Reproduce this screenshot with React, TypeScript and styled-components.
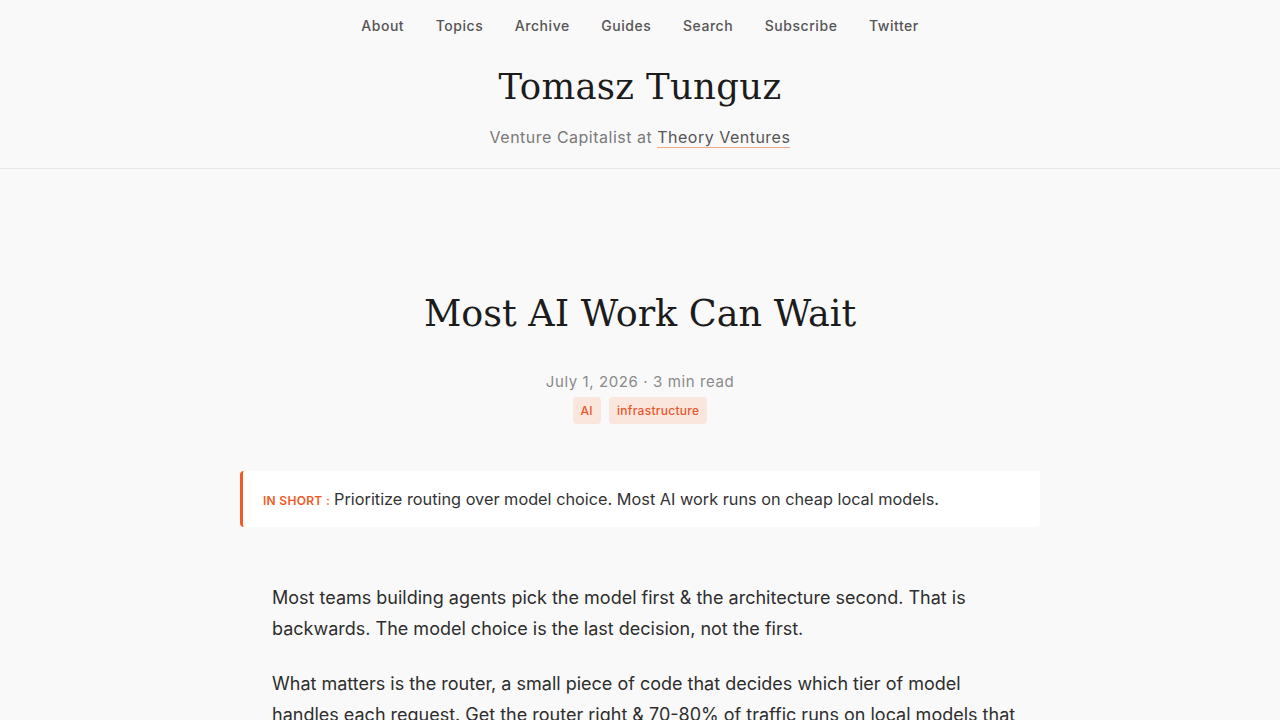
import styled, { createGlobalStyle } from "styled-components";

const GlobalStyle = createGlobalStyle`
  html, body {
    margin: 0;
    padding: 0;
    background: #f9f9f9;
  }
  body {
    font-family: Inter, "Liberation Sans", sans-serif;
    color: #2b2b2b;
  }
`;

const navItems = ["About", "Topics", "Archive", "Guides", "Search", "Subscribe", "Twitter"];

const App = () => {
  return (
    <>
      <GlobalStyle />
      <Header>
        <Nav>
          {navItems.map((item) => (
            <NavLink key={item} href="#">
              {item}
            </NavLink>
          ))}
        </Nav>
        <SiteTitle>Tomasz Tunguz</SiteTitle>
        <Tagline>
          Venture Capitalist at <Underlined href="#">Theory Ventures</Underlined>
        </Tagline>
      </Header>

      <Article>
        <PostTitle>Most AI Work Can Wait</PostTitle>
        <Meta>July 1, 2026 · 3 min read</Meta>
        <Tags>
          <Tag>AI</Tag>
          <Tag>infrastructure</Tag>
        </Tags>

        <Summary>
          <SummaryLabel>IN SHORT :</SummaryLabel>
          <SummaryText>
            Prioritize routing over model choice. Most AI work runs on cheap local models.
          </SummaryText>
        </Summary>

        <Body>
          <P>
            Most teams building agents pick the model first &amp; the architecture second. That is
            backwards. The model choice is the last decision, not the first.
          </P>
          <P>
            What matters is the router, a small piece of code that decides which tier of model
            handles each request. Get the router right &amp; 70-80% of traffic runs on local models that
            cost almost nothing to run.
          </P>
        </Body>
      </Article>
    </>
  );
};

export default App;

const Header = styled.header`
  display: flex;
  flex-direction: column;
  align-items: center;
  border-bottom: 1px solid #e9e9e9;
  padding-bottom: 20px;
`;

const Nav = styled.nav`
  display: flex;
  justify-content: center;
  gap: 31.5px;
  padding-top: 17px;
  height: 18px;
`;

const NavLink = styled.a`
  font-size: 14px;
  font-weight: 500;
  letter-spacing: 0.55px;
  color: #555;
  text-decoration: none;
`;

const SiteTitle = styled.h1`
  font-family: "DejaVu Serif", "Liberation Serif", serif;
  font-weight: 400;
  font-size: 35.5px;
  letter-spacing: 0.3px;
  color: #1c1c1c;
  margin: 28px 0 0;
  line-height: 48px;
`;

const Tagline = styled.p`
  font-size: 16px;
  letter-spacing: 0.5px;
  color: #7a7a7a;
  margin: 15px 0 0;
  line-height: 22px;
`;

const Underlined = styled.a`
  color: #555;
  text-decoration: none;
  border-bottom: 1px solid #f0a58c;
`;

const Article = styled.main`
  width: 800px;
  margin: 0 auto;
  display: flex;
  flex-direction: column;
  align-items: center;
  padding-top: 118px;
`;

const PostTitle = styled.h2`
  font-family: "DejaVu Serif", "Liberation Serif", serif;
  font-weight: 400;
  font-size: 36.5px;
  color: #1c1c1c;
  margin: 0;
  line-height: 54px;
`;

const Meta = styled.div`
  margin-top: 31px;
  font-size: 15px;
  letter-spacing: 0.6px;
  color: #8a8a8a;
  line-height: 20px;
`;

const Tags = styled.div`
  display: flex;
  gap: 8px;
  margin-top: 5px;
`;

const Tag = styled.span`
  background: #fae6dd;
  color: #e9582c;
  font-size: 12px;
  font-weight: 500;
  letter-spacing: 0.3px;
  padding: 0 8px;
  height: 27px;
  line-height: 27px;
  border-radius: 4px;
`;

const Summary = styled.div`
  align-self: stretch;
  margin-top: 47px;
  background: #fff;
  border-left: 3px solid #f05a24;
  border-radius: 4px;
  height: 56px;
  display: flex;
  align-items: center;
  padding-left: 20px;
  gap: 4px;
`;

const SummaryLabel = styled.span`
  font-size: 12px;
  font-weight: 600;
  letter-spacing: 0.3px;
  color: #f05a24;
  padding-top: 2px;
`;

const SummaryText = styled.span`
  font-size: 16.3px;
  color: #333;
`;

const Body = styled.div`
  align-self: stretch;
  padding: 55px 16px 0 32px;
`;

const P = styled.p`
  font-size: 18px;
  line-height: 31px;
  color: #2e2e2e;
  margin: 0 0 24px;
`;
